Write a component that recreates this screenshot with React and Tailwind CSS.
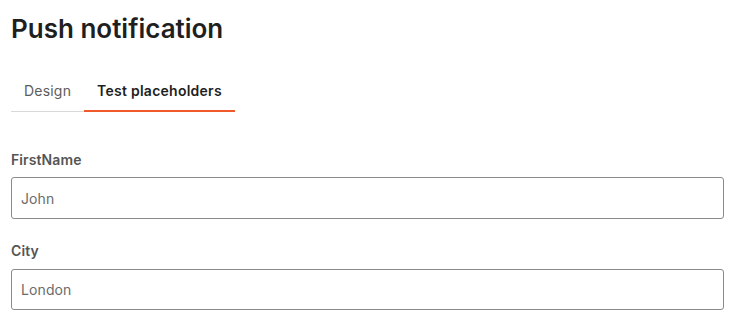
export default function App() {
  return (
    <div className="w-[737px] h-[329px] bg-white pl-[11px] pr-[13px] font-['Inter',sans-serif] overflow-hidden">
      <h1 className="pt-[13px] text-[26px] leading-[32px] font-semibold text-[#1f1f1f] tracking-[0px]">
        Push notification
      </h1>
      <div className="mt-[36px] flex">
        <div className="flex border-b border-[#d9d9d9]">
          <button className="px-[13px] pb-[9px] text-[14px] leading-[20px] tracking-[0.2px] text-[#5c5c5c] border-b-2 border-transparent -mb-px">
            Design
          </button>
          <button className="px-[13px] pb-[9px] text-[14px] leading-[20px] tracking-[0.25px] font-semibold text-[#1f1f1f] border-b-2 border-[#f0592a] -mb-px">
            Test placeholders
          </button>
        </div>
      </div>
      <div className="mt-[38px] flex flex-col">
        <label className="text-[14px] leading-[20px] tracking-[0.1px] font-semibold text-[#555555]">FirstName</label>
        <div className="mt-[7px] h-[42px] border border-[#8a8a8a] rounded-[3px] flex items-center px-[9px] text-[14px] tracking-[0.1px] text-[#6b6b6b]">
          John
        </div>
        <label className="mt-[22px] text-[14px] leading-[20px] tracking-[0.1px] font-semibold text-[#555555]">City</label>
        <div className="mt-[8px] h-[41px] border border-[#8a8a8a] rounded-[3px] flex items-center px-[9px] text-[14px] tracking-[0.1px] text-[#6b6b6b]">
          London
        </div>
      </div>
    </div>
  );
}
